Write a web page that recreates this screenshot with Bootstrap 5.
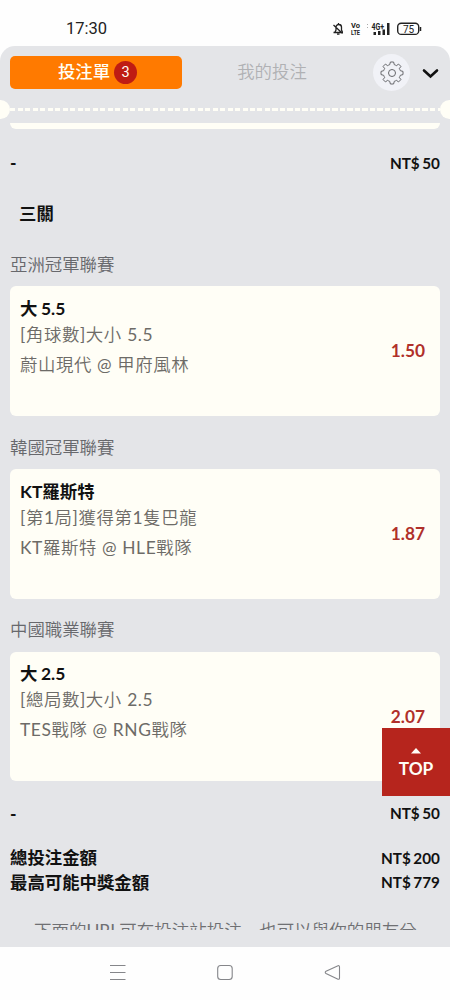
<!DOCTYPE html>
<html lang="zh-Hant">
<head>
<meta charset="utf-8">
<meta name="viewport" content="width=device-width, initial-scale=1">
<title>投注單</title>
<link href="https://cdn.jsdelivr.net/npm/bootstrap@5.3.0/dist/css/bootstrap.min.css" rel="stylesheet">
<style>
html, body { height: 1000px; overflow: hidden; }
body { background: #fefefe; font-family: Lato, "Noto Sans CJK TC", sans-serif; font-size: 17.4px; color: #111; }
.phone { width: 450px; height: 1000px; }
.status { height: 46px; padding: 12px 28px 0 66px; }
.clock { font: 400 16.5px/34px Roboto, sans-serif; color: #222; }
.sheet { height: 901px; background: #e4e5e8; border-radius: 15px 15px 0 0; overflow: hidden; }
.tabs { height: 53px; padding: 0 11px 0 10px; }
.tab-on { width: 172px; height: 33px; padding-left: 3px; border-radius: 5px; background: #ff7a00; color: #fffef5; font-weight: 500; }
.tab-off { width: 180px; color: #b0b1b4; font-weight: 350; }
.count { width: 23px; height: 23px; background: #bf1c13; font: 400 14.5px/23px Roboto, sans-serif; }
.gear { width: 37px; height: 37px; background: #f1f2f7; }
.tear { height: 20px; margin: 0 -9px; }
.tear i { width: 19px; height: 19px; background: #fffef6; }
.tear b { height: 3px; background: repeating-linear-gradient(90deg, #fffef6 0 5px, transparent 5px 7.5px); }
.slip-end { height: 6px; margin: 4px 10px 0; background: #fffef6; border-radius: 0 0 6px 6px; }
.sum { height: 24.5px; padding: 0 10px; font-weight: 600; }
.sum-combo { height: 68px; }
.sum-last { height: 65px; }
.dash { font-weight: 900; }
.amt { font-size: 15.3px; font-weight: 700; word-spacing: -1.2px; }
.combo { line-height: 34px; padding: 0 0 2.4px 19px; font-weight: 600; }
.league { line-height: 26px; margin: 18.6px 10px 8.5px; color: #67686c; font-weight: 350; }
.bet { height: 129.5px; margin: 0 10px; padding: 9.5px 15px 0 10px; background: #fffef6; border-radius: 6px; }
.pick { line-height: 25px; margin-bottom: -1px; font-weight: 700; word-spacing: -.6px; }
.info { line-height: 30px; letter-spacing: .6px; color: #6d6b67; font-weight: 350; white-space: nowrap; }
.info span { font-weight: 400; }
.odds { font-size: 17.3px; font-weight: 700; color: #b0302a; line-height: 26px; padding-bottom: 9px; }
.note { height: 10.5px; line-height: 21px; overflow: hidden; color: #6f7073; font-weight: 350; font-size: 17.5px; padding-left: 34px; white-space: nowrap; margin-top: 24px; }
.low-comma { font-family: "Noto Sans CJK SC", sans-serif; }
.to-top { right: 0; top: 728px; width: 68px; height: 68px; background: #b6251d; color: #fffef6; font-size: 17.3px; font-weight: 700; }
.keys { height: 53px; }
</style>
</head>
<body>
<div class="phone position-relative d-flex flex-column">
  <div class="status d-flex justify-content-between align-items-center">
    <span class="clock">17:30</span>
    <svg width="90" height="16" viewBox="332 21 90 16" fill="none" stroke="#222">
      <path d="M333.500 32.500h9.500M335 32l1-2v-2.500a2.800 2.800 0 0 1 3-3 2.800 2.800 0 0 1 2.500 3v2.500l1 2M333.500 25l9 8.500M337 34.200h2.500M338.500 23v1.500" stroke-width="1.300"/>
      <g fill="#222" stroke="none" font-family="Roboto, sans-serif" font-weight="700">
        <text x="351" y="28.300" font-size="7.500" textLength="9" lengthAdjust="spacingAndGlyphs">Vo</text>
        <text x="351" y="35" font-size="7.500" textLength="9" lengthAdjust="spacingAndGlyphs">LTE</text>
        <text x="371.500" y="29.500" font-size="8.500" textLength="12.500" lengthAdjust="spacingAndGlyphs">4G+</text>
        <rect x="373.500" y="32" width="2.500" height="3"/><rect x="378" y="31" width="2.500" height="4"/><rect x="382.500" y="29.500" width="2.500" height="5.500"/><rect x="387" y="23" width="2.500" height="12"/>
        <text x="403" y="32.500" font-size="10" font-weight="400">75</text>
      </g>
      <path d="M367.500 24v1M367.500 27v1" stroke="#aaa"/>
      <rect x="397.700" y="23.200" width="21" height="11.200" rx="3.500" stroke-width="1.400"/>
      <path d="M420.500 27v4" stroke-width="1.500"/>
    </svg>
  </div>

  <main class="sheet">
    <div class="tabs d-flex align-items-center">
      <div class="tab-on d-flex align-items-center justify-content-center gap-1"><span>投注單</span><span class="count rounded-circle text-center">3</span></div>
      <div class="tab-off text-center">我的投注</div>
      <div class="gear rounded-circle d-flex align-items-center justify-content-center ms-auto">
        <svg width="24" height="24" viewBox="-12 -12 24 24" fill="none" stroke="#66676b" stroke-width="1" stroke-linejoin="round">
          <circle r="3.500"/>
          <path d="M-1.600 -11H1.600L2.300 -8.300Q3.500 -8 4.300 -7.300L6.600 -8.900L8.900 -6.600L7.300 -4.300Q8 -3.500 8.300 -2.300L11 -1.600V1.600L8.300 2.300Q8 3.500 7.300 4.300L8.900 6.600L6.600 8.900L4.300 7.300Q3.500 8 2.300 8.300L1.600 11H-1.600L-2.300 8.300Q-3.500 8 -4.300 7.300L-6.600 8.900L-8.900 6.600L-7.300 4.300Q-8 3.500 -8.300 2.300L-11 1.600V-1.600L-8.300 -2.300Q-8 -3.500 -7.300 -4.300L-8.900 -6.600L-6.600 -8.900L-4.300 -7.300Q-3.500 -8 -2.300 -8.300Z"/>
        </svg>
      </div>
      <svg class="ms-2" width="21" height="16" viewBox="0 0 21 16" fill="none" stroke="#111" stroke-width="2.600"><path d="M6 5.500l6.500 6L19 5.500" stroke-linecap="round"/></svg>
    </div>
    <div class="tear d-flex align-items-center"><i class="rounded-circle"></i><b class="flex-fill"></b><i class="rounded-circle"></i></div>
    <div class="slip-end"></div>

    <div class="sum sum-combo d-flex justify-content-between align-items-center"><span class="dash">-</span><span class="amt">NT$ 50</span></div>
    <div class="combo">三關</div>

    <div class="league">亞洲冠軍聯賽</div>
    <section class="bet d-flex justify-content-between">
      <div><div class="pick">大 5.5</div><div class="info"><span>[</span>角球數<span>]</span>大小 <span>5.5</span></div><div class="info">蔚山現代<span> @ </span>甲府風林</div></div>
      <div class="odds align-self-center">1.50</div>
    </section>

    <div class="league">韓國冠軍聯賽</div>
    <section class="bet d-flex justify-content-between">
      <div><div class="pick">KT羅斯特</div><div class="info"><span>[</span>第<span>1</span>局<span>]</span>獲得第<span>1</span>隻巴龍</div><div class="info"><span>KT</span>羅斯特<span> @ HLE</span>戰隊</div></div>
      <div class="odds align-self-center">1.87</div>
    </section>

    <div class="league">中國職業聯賽</div>
    <section class="bet d-flex justify-content-between">
      <div><div class="pick">大 2.5</div><div class="info"><span>[</span>總局數<span>]</span>大小 <span>2.5</span></div><div class="info"><span>TES</span>戰隊<span> @ RNG</span>戰隊</div></div>
      <div class="odds align-self-center">2.07</div>
    </section>

    <div class="sum sum-last d-flex justify-content-between align-items-center"><span class="dash">-</span><span class="amt">NT$ 50</span></div>
    <div class="sum d-flex justify-content-between align-items-center"><span>總投注金額</span><span class="amt">NT$ 200</span></div>
    <div class="sum d-flex justify-content-between align-items-center"><span>最高可能中獎金額</span><span class="amt">NT$ 779</span></div>
    <div class="note">下面的<span class="fw-normal">URL</span>可在投注站投注<span class="low-comma" lang="zh-Hans">，</span>也可以與你的朋友分</div>
  </main>

  <nav class="keys d-flex align-items-center">
    <svg width="450" height="53" viewBox="0 947 450 53" fill="none" stroke="#85868a" stroke-width="1.100">
      <path d="M110 965.500h15.500M110 972.500h15.500M110 979.500h15.500"/>
      <rect x="217.700" y="965.500" width="14.500" height="14" rx="3"/>
      <path d="M326 971.300L338 965.700Q339.500 965.300 339.500 967V978Q339.500 979.700 338 979.200L326 973.500Q324.500 972.400 326 971.300Z"/>
    </svg>
  </nav>

  <a class="to-top position-absolute d-flex flex-column align-items-center text-decoration-none" href="#">
    <svg class="mt-3" width="10" height="12" viewBox="0 0 10 12"><path d="M0 9.500L5 4l5 5.500z" fill="#fffef6"/></svg>
    <span class="lh-base">TOP</span>
  </a>
</div>
<script src="https://cdn.jsdelivr.net/npm/bootstrap@5.3.0/dist/js/bootstrap.bundle.min.js"></script>
</body>
</html>
